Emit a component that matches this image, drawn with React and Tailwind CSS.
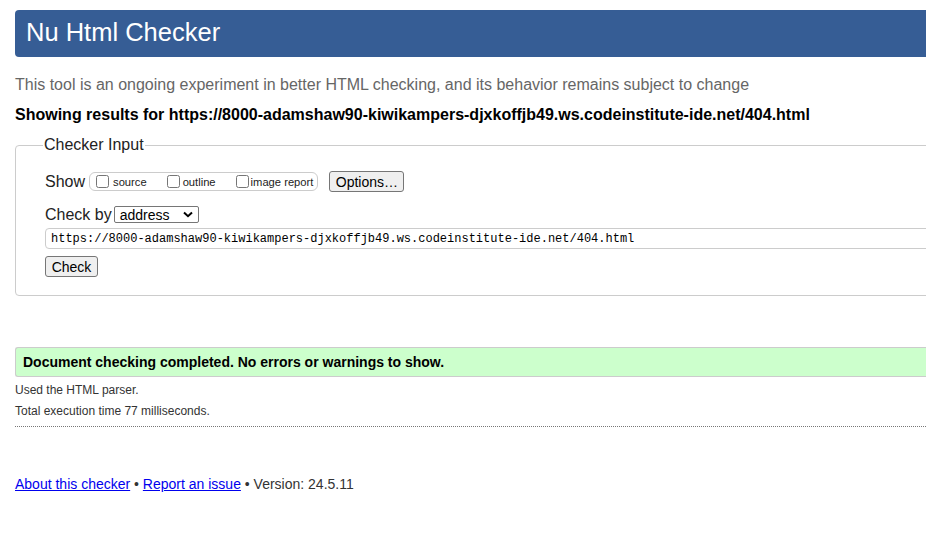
import React from "react";

export default function App() {
  const url =
    "https://8000-adamshaw90-kiwikampers-djxkoffjb49.ws.codeinstitute-ide.net/404.html";
  return (
    <div className="w-[926px] h-[551px] overflow-hidden bg-white font-['Liberation_Sans',Arial,sans-serif] text-[#111]">
      <div className="w-[1000px] pl-[15px]">
        <header className="mt-[10px] h-[47px] rounded-[4px] bg-[#365d95] flex items-center pl-[11px]">
          <h1 className="text-white text-[25.5px] leading-none mt-[-1px]">Nu Html Checker</h1>
        </header>

        <p className="mt-[19px] text-[16px] leading-[18px] text-[#666]">
          This tool is an ongoing experiment in better HTML checking, and its behavior remains subject to change
        </p>
        <p className="mt-[12px] text-[16px] leading-[18px] font-bold text-black">
          Showing results for {url}
        </p>

        <fieldset className="mt-[12px] border border-[#ccc] rounded-[4px] pl-[29px] pb-[18px]">
          <legend className="ml-[-2px] px-[1px] text-[16px] leading-[18px] text-[#222]">Checker Input</legend>

          <div className="mt-[17px] flex items-center h-[21px]">
            <span className="text-[16px] leading-[18px] text-[#222]">Show</span>
            <div className="ml-[4px] h-[19px] flex items-center rounded-[6px] border border-[#ccc] pl-[2px] pr-[4px]">
              <label className="flex items-center">
                <input type="checkbox" className="m-0 ml-[4px] mr-[4px] w-[13px] h-[13px]" />
                <span className="text-[11.2px] leading-[13px] mt-[2px] mr-[20px] text-[#222]">source</span>
              </label>
              <label className="flex items-center">
                <input type="checkbox" className="m-0 mr-[3px] w-[13px] h-[13px]" />
                <span className="text-[11.2px] leading-[13px] mt-[2px] mr-[20px] text-[#222]">outline</span>
              </label>
              <label className="flex items-center">
                <input type="checkbox" className="m-0 mr-[2px] w-[13px] h-[13px]" />
                <span className="text-[11.2px] leading-[13px] mt-[2px] text-[#222]">image report</span>
              </label>
            </div>
            <button className="ml-[11px] h-[21px] w-[75px] rounded-[3px] border border-[#767676] bg-[#efefef] text-[14px] leading-none text-black">
              Options…
            </button>
          </div>

          <div className="mt-[13px] flex items-center h-[19px]">
            <span className="text-[16px] leading-[18px] text-[#222]">Check by</span>
            <div className="ml-[2px] h-[17px] w-[85px] flex items-center justify-between border border-[#767676] rounded-[2px] pl-[5px] pr-[5px]">
              <span className="text-[14px] leading-none text-black">address</span>
              <svg width="10" height="7" viewBox="0 0 10 7">
                <path d="M1 1.5 L5 5.2 L9 1.5" fill="none" stroke="#000" strokeWidth="2" />
              </svg>
            </div>
          </div>

          <div className="mt-[4px] h-[21px] flex items-center border border-[#ccc] rounded-[4px] pl-[5px]">
            <span className="font-['Liberation_Mono','DejaVu_Sans_Mono',monospace] text-[12px] leading-none text-black">
              {url}
            </span>
          </div>

          <button className="mt-[7px] h-[21px] w-[53px] rounded-[3px] border border-[#767676] bg-[#efefef] text-[14px] leading-none text-black block">
            Check
          </button>
        </fieldset>

        <div className="mt-[51px] h-[30px] flex items-center border border-[#ccc] border-r-0 rounded-l-[3px] bg-[#ccffcc] pl-[7px]">
          <span className="text-[14px] font-bold text-black">
            Document checking completed. No errors or warnings to show.
          </span>
        </div>

        <p className="mt-[5px] text-[12px] leading-[16px] text-[#333]">Used the HTML parser.</p>
        <p className="mt-[5px] text-[12px] leading-[16px] text-[#333]">Total execution time 77 milliseconds.</p>

        <div className="mt-[7px] border-t border-dotted border-[#777]" />

        <p className="mt-[49px] text-[14px] leading-[16px] text-[#333]">
          <a href="#" className="text-[#0000ee] underline">About this checker</a>
          {" • "}
          <a href="#" className="text-[#0000ee] underline">Report an issue</a>
          {" • Version: 24.5.11"}
        </p>
      </div>
    </div>
  );
}
